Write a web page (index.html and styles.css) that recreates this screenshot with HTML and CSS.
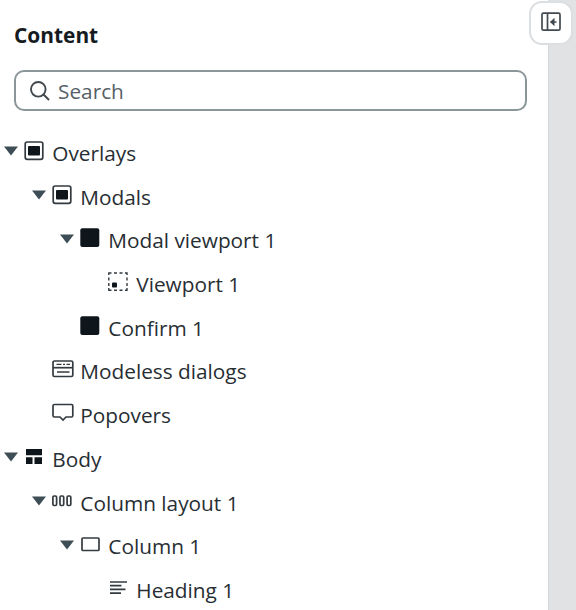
FILE: index.html
```html
<!DOCTYPE html>
<html lang="en">
<head>
<meta charset="utf-8">
<title>Content</title>
<link rel="stylesheet" href="styles.css">
</head>
<body>
<div class="app">
  <aside class="panel">
    <h2 class="title">Content</h2>
    <div class="search">
      <svg class="search-icon" width="20" height="20" viewBox="0 0 20 20"><circle cx="8.3" cy="8.3" r="7.3"/><path d="M13.5 13.5 19 19"/></svg>
      <span>Search</span>
    </div>
    <ul class="tree">
      <li class="row"><svg class="caret" viewBox="0 0 14 10"><path d="M0 .5h14L7 9.5z"/></svg><svg class="icon" viewBox="0 0 20 20"><rect x="1.200" y="1" width="17.600" height="17.300" rx="2"/><rect class="fill" x="4" y="5" width="12" height="9.5" rx="1"/></svg><span>Overlays</span></li>
      <li class="row level-1"><svg class="caret" viewBox="0 0 14 10"><path d="M0 .5h14L7 9.5z"/></svg><svg class="icon" viewBox="0 0 20 20"><rect x="1.200" y="1" width="17.600" height="17.300" rx="2"/><rect class="fill" x="4" y="5" width="12" height="9.5" rx="1"/></svg><span>Modals</span></li>
      <li class="row level-2"><svg class="caret" viewBox="0 0 14 10"><path d="M0 .5h14L7 9.5z"/></svg><svg class="icon" viewBox="0 0 20 20"><rect class="fill" x="0.300" y="0.300" width="19" height="18.700" rx="2"/></svg><span>Modal viewport 1</span></li>
      <li class="row level-3"><i class="caret"></i><svg class="icon" viewBox="0 0 20 20"><path class="dash" d="M.8 3V1h2.700M6 1h3M11.5 1h3M17 1h2v2M19 5.5v3M19 11v3M19 16v2.300H17M14.500 18.300h-3M9 18.300H6M3.500 18.300H.8V16M.8 14v-3M.8 8.500v-3"/><rect class="fill" x="4" y="10.500" width="5" height="5" rx="1"/></svg><span>Viewport 1</span></li>
      <li class="row level-2"><i class="caret"></i><svg class="icon" viewBox="0 0 20 20"><rect class="fill" x="0.300" y="0.300" width="19" height="18.700" rx="2"/></svg><span>Confirm 1</span></li>
      <li class="row level-1"><i class="caret"></i><svg class="icon wide" viewBox="0 0 22 20"><rect x="1" y="2" width="19.800" height="15.500" rx="1.500"/><path d="M1 8.700h20"/><path class="thin" d="M4.500 5.400h5M11 5.400h2M14.500 5.400H18M5 13h12.500"/></svg><span>Modeless dialogs</span></li>
      <li class="row level-1"><i class="caret"></i><svg class="icon wide" viewBox="0 0 22 20"><path d="M2.500 1.500h17Q20.800 1.500 20.800 3v9.500q0 1.500-1.300 1.500H14l-3 3-3-3H2.500Q1 14 1 12.500V3q0-1.500 1.500-1.500z"/></svg><span>Popovers</span></li>
      <li class="row"><svg class="caret" viewBox="0 0 14 10"><path d="M0 .5h14L7 9.5z"/></svg><svg class="icon" viewBox="0 0 20 20"><path class="fill" d="M2 2h16v6.300H2zM2 10.200h6.500v6.800H2zM10.500 10.200H18v6.800h-7.500z"/></svg><span>Body</span></li>
      <li class="row level-1"><svg class="caret" viewBox="0 0 14 10"><path d="M0 .5h14L7 9.5z"/></svg><svg class="icon" viewBox="0 0 20 20"><rect x=".9" y="5" width="3.700" height="9.500" rx="1.2"/><rect x="8" y="5" width="3.700" height="9.500" rx="1.2"/><rect x="15.100" y="5" width="3.700" height="9.500" rx="1.2"/></svg><span>Column layout 1</span></li>
      <li class="row level-2"><svg class="caret" viewBox="0 0 14 10"><path d="M0 .5h14L7 9.5z"/></svg><svg class="icon" viewBox="0 0 20 20"><rect x="2" y="4" width="17" height="12.500" rx="1"/></svg><span>Column 1</span></li>
      <li class="row level-3"><i class="caret"></i><svg class="icon" viewBox="0 0 20 20"><path d="M2 4h17M2 7.700h11.500M2 11.400h15.500M2 15.100h11"/></svg><span>Heading 1</span></li>
    </ul>
  </aside>
  <div class="canvas"></div>
  <button class="toggle" aria-label="Collapse panel">
    <svg class="toggle-icon" width="20" height="20" viewBox="0 0 20 20"><rect x="1" y="1.200" width="18" height="17" rx="1.500"/><path d="M6.500 1v17M9.500 10H15.500"/><path class="head" d="M13.500 5.800v8.400L9 10z"/></svg>
  </button>
</div>
</body>
</html>
```

FILE: styles.css
```css
* { box-sizing: border-box; }
body {
  margin: 0;
  font-family: "Open Sans", sans-serif;
  font-size: 20.8px;
  color: #272e33;
}
.app {
  position: relative;
  display: flex;
  height: 610px;
  overflow: hidden;
  background: #fff;
}
.panel {
  width: 549px;
  flex: none;
  padding-top: 20px;
  border-right: 1px solid #d4d8da;
}
.canvas { flex: 1; background: #e0e2e4; }
.title {
  margin: 0 0 20px 14px;
  font-size: 20.9px;
  line-height: 30px;
  font-weight: 700;
  color: #151b20;
}
.search {
  display: flex;
  align-items: center;
  gap: 8.5px;
  width: 513px;
  height: 41px;
  margin-left: 14px;
  padding-left: 13.5px;
  border: 2px solid #8b969b;
  border-radius: 10px;
  color: #566067;
}
.search-icon { fill: none; stroke: #40484e; stroke-width: 1.9; }
.tree { list-style: none; margin: 20px 0 0; padding: 0; }
.row {
  display: flex;
  align-items: center;
  height: 43.72px;
  padding-left: 3.5px;
  white-space: nowrap;
}
.level-1 { padding-left: 31.5px; }
.level-2 { padding-left: 59.5px; }
.level-3 { padding-left: 87.5px; }
.caret {
  flex: none;
  width: 14px;
  height: 10px;
  margin: 0 6.5px 3px 0;
  fill: #3e4e57;
}
.icon {
  flex: none;
  width: 20px;
  height: 20px;
  margin: 0 8.3px 4px 0;
  fill: none;
  stroke: #343b40;
  stroke-width: 1.7;
}
.wide { width: 22px; margin-right: 6.3px; }
.fill { fill: #0f161b; stroke: none; }
.dash { stroke-width: 1.4; }
.thin { stroke-width: 1.4; }
.toggle {
  position: absolute;
  top: 1px;
  left: 529px;
  display: grid;
  place-items: center;
  width: 44px;
  height: 44px;
  padding: 0 0 2px;
  background: #fff;
  border: 2px solid #dcdfe1;
  border-radius: 13px;
}
.toggle-icon { fill: none; stroke: #414a50; stroke-width: 1.7; }
.head { fill: #414a50; stroke: none; }
```
